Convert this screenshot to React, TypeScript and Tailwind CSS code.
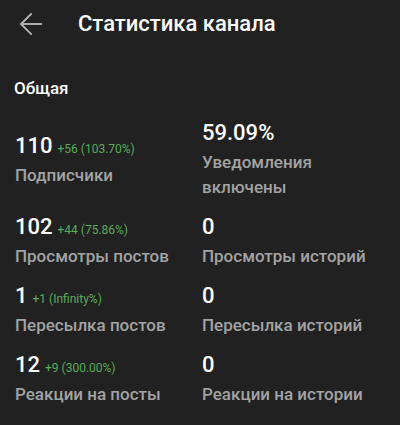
import React from "react"

type Stat = {
  value: string
  delta?: string
  label: string
}

const stats: Stat[] = [
  { value: "110", delta: "+56 (103.70%)", label: "Подписчики" },
  { value: "59.09%", label: "Уведомления включены" },
  { value: "102", delta: "+44 (75.86%)", label: "Просмотры постов" },
  { value: "0", label: "Просмотры историй" },
  { value: "1", delta: "+1 (Infinity%)", label: "Пересылка постов" },
  { value: "0", label: "Пересылка историй" },
  { value: "12", delta: "+9 (300.00%)", label: "Реакции на посты" },
  { value: "0", label: "Реакции на истории" },
]

function StatCell({ stat }: { stat: Stat }) {
  return (
    <div className="flex flex-col">
      <div className="flex items-baseline gap-[5px]">
        <span className="text-[22px] leading-[28px] font-medium text-white">{stat.value}</span>
        {stat.delta && (
          <span className="text-[12px] text-[#5aa95c]">{stat.delta}</span>
        )}
      </div>
      <div className="mt-[3px] text-[17px] leading-[25px] font-medium text-[#a3a3a3] pr-4">
        {stat.label}
      </div>
    </div>
  )
}

export default function App() {
  return (
    <div
      className="w-[400px] h-[425px] bg-[#212121] overflow-hidden"
      style={{ fontFamily: "Roboto, 'Noto Sans', sans-serif" }}
    >
      {/* Header */}
      <div className="h-[48px] flex items-center">
        <button className="ml-[16px] w-[30px] h-[30px] flex items-center justify-center">
          <svg width="30" height="30" viewBox="0 0 24 24" fill="none" stroke="#b5b5b5" strokeWidth="1.5" strokeLinecap="square">
            <path d="M20 12H5" />
            <path d="M12 4l-8 8 8 8" />
          </svg>
        </button>
        <h1 className="ml-[32px] text-[22px] leading-[28px] font-medium text-white">
          Статистика канала
        </h1>
      </div>

      {/* Section */}
      <div className="pt-[30px] pl-[14px] text-[17px] leading-[20px] font-medium text-white">
        Общая
      </div>

      <div className="mt-[21px] pl-[15px] grid grid-cols-[187px_1fr] items-center gap-y-[13px]">
        {stats.map((s, i) => (
          <StatCell key={i} stat={s} />
        ))}
      </div>
    </div>
  )
}
